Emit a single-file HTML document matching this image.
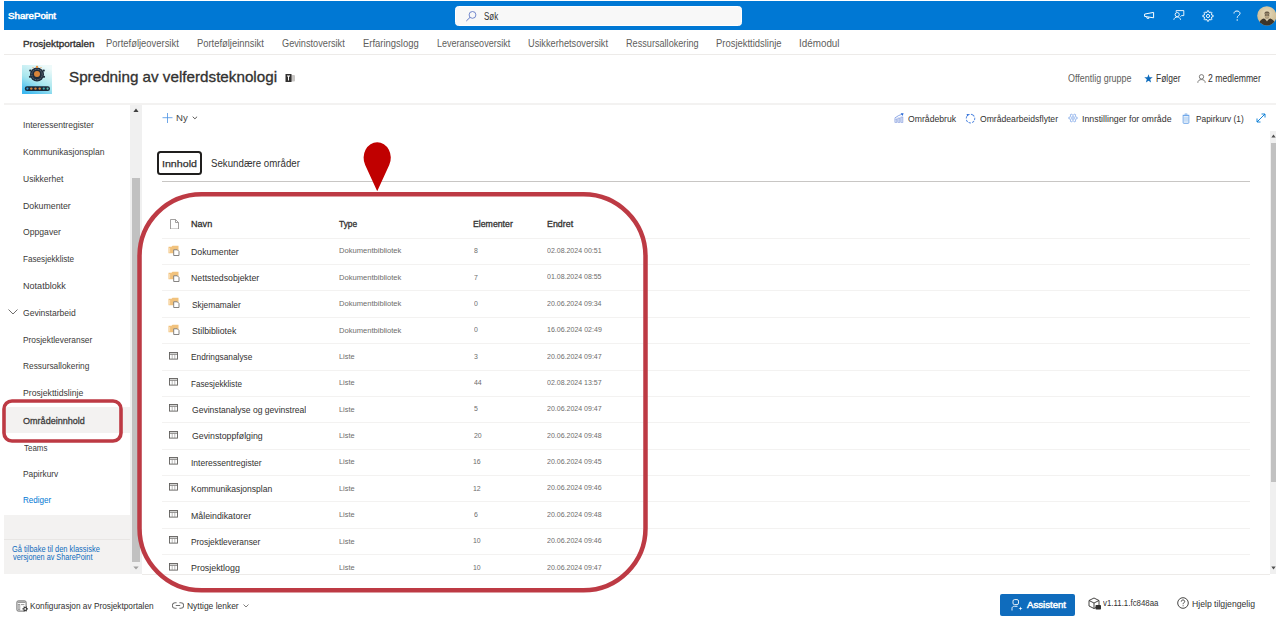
<!DOCTYPE html>
<html><head><meta charset="utf-8">
<style>
*{box-sizing:border-box;margin:0;padding:0}
html,body{width:1277px;height:624px;overflow:hidden;background:#fff;font-family:"Liberation Sans",sans-serif;color:#323130}
.a{position:absolute;white-space:nowrap;display:block}
.t{position:absolute;white-space:nowrap;line-height:1;transform-origin:0 0}
</style></head><body>
<div class="a" style="left:4px;top:1px;width:1272px;height:28.7px;background:#0078d4;"></div>
<div class="t" style="left:7.56px;top:11.91px;font-size:9.197px;-webkit-text-stroke:0.5px #fff;color:#fff;transform:scaleX(1.0573);">SharePoint</div>
<div class="a" style="left:455px;top:6px;width:287px;height:19.5px;background:#f8f8f8;border:1px solid #fff;border-radius:3.5px"></div>
<svg class="a" style="left:465px;top:9.5px" width="12" height="12" viewBox="0 0 12 12"><circle cx="7.5" cy="4.9" r="3.4" fill="none" stroke="#5b74c4" stroke-width="0.85"/><line x1="5" y1="7.4" x2="1.3" y2="11" stroke="#5b74c4" stroke-width="0.95"/></svg>
<div class="t" style="left:484.34px;top:11.74px;font-size:10.000px;color:#323130;transform:scaleX(0.7954);">Søk</div>
<svg class="a" style="left:1142px;top:9px" width="14" height="12" viewBox="0 0 14 12">
<path d="M2.6 5.1 L11.6 3.4 V8.8 L2.6 7.4 Z" fill="none" stroke="#fff" stroke-width="1" stroke-linejoin="round"/>
<path d="M4.6 7.7 L5.1 9.4 L6.9 9.4 L6.7 8.2" fill="none" stroke="#fff" stroke-width="0.9"/></svg>
<svg class="a" style="left:1172px;top:9px" width="14" height="12" viewBox="0 0 14 12">
<path d="M4.2 2.9 V1.6 H11.8 V6.6 H9.6 L8.4 7.6" fill="none" stroke="#fff" stroke-width="0.9" stroke-linejoin="round"/>
<circle cx="5.2" cy="5.6" r="2.1" fill="#0078d4" stroke="#fff" stroke-width="0.9"/>
<path d="M1.8 10.8 C2.2 8.9 3.5 8 5.2 8 C6.9 8 8.2 8.9 8.6 10.8" fill="none" stroke="#fff" stroke-width="0.9"/></svg>
<svg class="a" style="left:1202px;top:9.5px" width="12" height="12" viewBox="0 0 12 12">
<path d="M9.81 5.16 L11.14 5.21 L11.14 6.79 L9.81 6.84 L9.28 8.10 L10.19 9.07 L9.07 10.19 L8.10 9.28 L6.84 9.81 L6.79 11.14 L5.21 11.14 L5.16 9.81 L3.90 9.28 L2.93 10.19 L1.81 9.07 L2.72 8.10 L2.19 6.84 L0.86 6.79 L0.86 5.21 L2.19 5.16 L2.72 3.90 L1.81 2.93 L2.93 1.81 L3.90 2.72 L5.16 2.19 L5.21 0.86 L6.79 0.86 L6.84 2.19 L8.10 2.72 L9.07 1.81 L10.19 2.93 L9.28 3.90 Z" fill="none" stroke="#fff" stroke-width="0.9" stroke-linejoin="round"/>
<circle cx="6" cy="6" r="1.6" fill="none" stroke="#fff" stroke-width="0.9"/></svg>
<svg class="a" style="left:1232px;top:9.5px" width="10" height="12" viewBox="0 0 10 12">
<path d="M2 3.5 C2 1.8 3.3 1 5 1 C6.7 1 8 2 8 3.5 C8 5.2 5.2 5.6 5.2 7.8" fill="none" stroke="#fff" stroke-width="1"/>
<circle cx="5.2" cy="10" r="0.7" fill="#fff"/></svg>
<svg class="a" style="left:1256.5px;top:5.7px" width="19.5" height="20" viewBox="0 0 19.5 20">
<defs><clipPath id="av"><circle cx="9.8" cy="9.8" r="9.6"/></clipPath><radialGradient id="avg" cx="0.5" cy="0.4" r="0.6"><stop offset="0" stop-color="#e6dcc0"/><stop offset="1" stop-color="#cdb98e"/></radialGradient></defs>
<circle cx="9.8" cy="9.8" r="9.6" fill="url(#avg)"/>
<g clip-path="url(#av)">
<path d="M1.5 20 C2 15.5 4 13.2 7 12.6 L10 14.5 L13 12.6 C16 13.2 18 15.5 18.5 20 Z" fill="#3d352b"/>
<path d="M8.4 12.8 L10 15.6 L11.6 12.8 Z" fill="#d8ccb0"/>
<ellipse cx="10" cy="9.2" rx="2.6" ry="3.1" fill="#b9a684"/>
<path d="M7.4 8.2 C7.4 6 8.5 5.6 10 5.6 C11.5 5.6 12.6 6 12.6 8.2 L12 7.4 L8 7.4 Z" fill="#6b5c48"/>
<circle cx="8.9" cy="9" r="0.8" fill="#3a3128"/><circle cx="11.1" cy="9" r="0.8" fill="#3a3128"/>
<path d="M8.2 11 C9 12.4 11 12.4 11.8 11 L11.4 12.6 L8.6 12.6 Z" fill="#8a7b64"/>
</g></svg>
<div class="t" style="left:23.21px;top:39.12px;font-size:9.664px;-webkit-text-stroke:0.35px #323130;color:#323130;transform:scaleX(1.0231);">Prosjektportalen</div>
<div class="t" style="left:106.25px;top:38.77px;font-size:10.073px;color:#605e5c;transform:scaleX(0.9362);">Porteføljeoversikt</div>
<div class="t" style="left:196.85px;top:38.77px;font-size:10.073px;color:#605e5c;transform:scaleX(0.9327);">Porteføljeinnsikt</div>
<div class="t" style="left:282.24px;top:38.77px;font-size:10.073px;color:#605e5c;transform:scaleX(0.9122);">Gevinstoversikt</div>
<div class="t" style="left:363.24px;top:38.77px;font-size:10.073px;color:#605e5c;transform:scaleX(0.9400);">Erfaringslogg</div>
<div class="t" style="left:436.68px;top:38.77px;font-size:10.073px;color:#605e5c;transform:scaleX(0.8963);">Leveranseoversikt</div>
<div class="t" style="left:528.01px;top:38.77px;font-size:10.073px;color:#605e5c;transform:scaleX(0.9170);">Usikkerhetsoversikt</div>
<div class="t" style="left:625.97px;top:38.77px;font-size:10.073px;color:#605e5c;transform:scaleX(0.9075);">Ressursallokering</div>
<div class="t" style="left:715.84px;top:38.77px;font-size:10.073px;color:#605e5c;transform:scaleX(0.9374);">Prosjekttidslinje</div>
<div class="t" style="left:799.11px;top:38.77px;font-size:10.073px;color:#605e5c;transform:scaleX(0.9789);">Idémodul</div>
<div class="a" style="left:4px;top:54px;width:1272px;height:1px;background:#edebe9;"></div>
<svg class="a" style="left:22px;top:65px" width="30" height="29" viewBox="0 0 30 29">
<defs><linearGradient id="lg" x1="0.7" y1="0" x2="0.2" y2="1"><stop offset="0" stop-color="#eefafa"/><stop offset="0.55" stop-color="#a8e6ee"/><stop offset="1" stop-color="#3cb8f0"/></linearGradient></defs>
<rect width="30" height="29" fill="url(#lg)"/>
<circle cx="15" cy="9.5" r="7" fill="#1f2d3d"/>
<circle cx="15" cy="9.5" r="5.2" fill="none" stroke="#7f8a96" stroke-width="0.8" stroke-dasharray="1 0.8"/>
<circle cx="15" cy="9" r="3" fill="#d9843a"/>
<circle cx="8.2" cy="5.6" r="1.1" fill="#1f2d3d"/><circle cx="21.8" cy="5.6" r="1.1" fill="#1f2d3d"/><circle cx="8" cy="11.8" r="1.1" fill="#1f2d3d"/><circle cx="22" cy="11.8" r="1.1" fill="#1f2d3d"/>
<circle cx="15" cy="1.9" r="1.2" fill="#e58d3a"/><circle cx="11" cy="2.6" r="0.7" fill="#f0a860"/><circle cx="19" cy="2.6" r="0.7" fill="#f0a860"/>
<rect x="2.8" y="21.3" width="25.2" height="4.6" rx="2.2" fill="#1b2838"/>
<circle cx="5.4" cy="23.6" r="1.1" fill="#2f9ad8"/><circle cx="9.3" cy="23.6" r="1.2" fill="#d9843a"/><circle cx="13.5" cy="23.6" r="1.2" fill="#d9843a"/><circle cx="17.7" cy="23.6" r="1.2" fill="#d9843a"/><circle cx="21.8" cy="23.6" r="1.1" fill="#3fb0b0"/><circle cx="25.6" cy="23.6" r="1.1" fill="#5ab8a8"/></svg>
<div class="t" style="left:68.71px;top:70.04px;font-size:14.955px;-webkit-text-stroke:0.32px #323130;color:#323130;transform:scaleX(1.0184);">Spredning av velferdsteknologi</div>
<svg class="a" style="left:285px;top:73px" width="11" height="10" viewBox="0 0 11 10">
<rect x="4.5" y="2" width="5.5" height="6.5" rx="1" fill="#c8c6c4"/><rect x="0.5" y="1" width="6" height="8" fill="#323130"/>
<path d="M2 3 H5 M3.5 3 V7.5" stroke="#fff" stroke-width="1"/></svg>
<div class="t" style="left:1067.80px;top:74.35px;font-size:10.219px;color:#605e5c;transform:scaleX(0.8773);">Offentlig gruppe</div>
<svg class="a" style="left:1143.5px;top:74px" width="9" height="9" viewBox="0 0 10 10"><path d="M5 0.3 L6.2 3.6 L9.7 3.7 L6.9 5.9 L7.9 9.4 L5 7.4 L2.1 9.4 L3.1 5.9 L0.3 3.7 L3.8 3.6 Z" fill="#0f6cbd"/></svg>
<div class="t" style="left:1156.22px;top:74.35px;font-size:10.219px;color:#323130;transform:scaleX(0.8313);">Følger</div>
<svg class="a" style="left:1197px;top:74px" width="9" height="9" viewBox="0 0 9 9"><circle cx="4.5" cy="2.8" r="2.2" fill="none" stroke="#605e5c" stroke-width="0.8"/><path d="M0.8 8.8 C0.8 6.5 2.5 5.6 4.5 5.6 C6.5 5.6 8.2 6.5 8.2 8.8" fill="none" stroke="#605e5c" stroke-width="0.8"/></svg>
<div class="t" style="left:1208.27px;top:74.35px;font-size:10.219px;color:#323130;transform:scaleX(0.8466);">2 medlemmer</div>
<div class="a" style="left:4px;top:103px;width:1272px;height:2px;background:#f3f2f1;"></div>
<div class="a" style="left:130px;top:105px;width:12px;height:469px;background:#f0f0f0;"></div>
<div class="a" style="left:131.5px;top:178px;width:8.5px;height:384px;background:#c1c1c1;"></div>
<svg class="a" style="left:133px;top:108px" width="6" height="4.5" viewBox="0 0 6 4.5"><path d="M0.4 3.9 L3 0.6 L5.6 3.9 Z" fill="#404040"/></svg>
<svg class="a" style="left:133px;top:565.5px" width="6" height="4" viewBox="0 0 6 4"><path d="M0.3 0.4 L3 3.6 L5.7 0.4 Z" fill="#a0a0a0"/></svg>
<div class="a" style="left:6px;top:406.5px;width:124px;height:26.5px;background:#f3f2f1;"></div>
<div class="t" style="left:23.03px;top:120.02px;font-size:9.781px;color:#3b3a39;transform:scaleX(0.8754);">Interessentregister</div>
<div class="t" style="left:23.11px;top:147.22px;font-size:9.781px;color:#3b3a39;transform:scaleX(0.8782);">Kommunikasjonsplan</div>
<div class="t" style="left:23.16px;top:173.52px;font-size:9.781px;color:#3b3a39;transform:scaleX(0.8726);">Usikkerhet</div>
<div class="t" style="left:23.10px;top:200.52px;font-size:9.781px;color:#3b3a39;transform:scaleX(0.8982);">Dokumenter</div>
<div class="t" style="left:23.41px;top:227.12px;font-size:9.781px;color:#3b3a39;transform:scaleX(0.8831);">Oppgaver</div>
<div class="t" style="left:23.15px;top:253.82px;font-size:9.781px;color:#3b3a39;transform:scaleX(0.8339);">Fasesjekkliste</div>
<div class="t" style="left:23.07px;top:280.82px;font-size:9.781px;color:#3b3a39;transform:scaleX(0.9288);">Notatblokk</div>
<div class="t" style="left:23.37px;top:307.62px;font-size:9.781px;color:#3b3a39;transform:scaleX(0.8746);">Gevinstarbeid</div>
<div class="t" style="left:23.13px;top:334.82px;font-size:9.781px;color:#3b3a39;transform:scaleX(0.8569);">Prosjektleveranser</div>
<div class="t" style="left:23.13px;top:361.42px;font-size:9.781px;color:#3b3a39;transform:scaleX(0.8546);">Ressursallokering</div>
<div class="t" style="left:23.10px;top:388.22px;font-size:9.781px;color:#3b3a39;transform:scaleX(0.8890);">Prosjekttidslinje</div>
<div class="t" style="left:23.39px;top:416.30px;font-size:9.454px;-webkit-text-stroke:0.28px #3b3a39;color:#3b3a39;transform:scaleX(0.9594);">Områdeinnhold</div>
<div class="t" style="left:23.64px;top:442.62px;font-size:9.781px;color:#3b3a39;transform:scaleX(0.8137);">Teams</div>
<div class="t" style="left:23.13px;top:469.02px;font-size:9.781px;color:#3b3a39;transform:scaleX(0.8545);">Papirkurv</div>
<div class="t" style="left:23.15px;top:495.42px;font-size:9.781px;color:#0078d4;transform:scaleX(0.8257);">Rediger</div>
<svg class="a" style="left:8px;top:309px" width="10" height="6" viewBox="0 0 10 6"><path d="M0.5 0.5 L5 5 L9.5 0.5" fill="none" stroke="#605e5c" stroke-width="0.9"/></svg>
<div class="a" style="left:4px;top:514.5px;width:126px;height:59.5px;background:#f3f2f1;"></div>
<div class="a" style="left:4px;top:539px;width:126px;height:1px;background:#e8e6e4;"></div>
<div class="t" style="left:12.43px;top:544.63px;font-size:8.467px;color:#0f6cbd;transform:scaleX(0.8814);">Gå tilbake til den klassiske</div>
<div class="t" style="left:13.06px;top:553.33px;font-size:8.467px;color:#0f6cbd;transform:scaleX(0.8626);">versjonen av SharePoint</div>
<svg class="a" style="left:162px;top:113px" width="11" height="10" viewBox="0 0 11 10"><path d="M5.5 0 V10 M0.5 4.7 H10.5" stroke="#4a90e2" stroke-width="0.8"/></svg>
<div class="t" style="left:176.03px;top:113.02px;font-size:9.781px;color:#4a4847;transform:scaleX(0.9865);">Ny</div>
<svg class="a" style="left:192.3px;top:115.6px" width="6" height="4" viewBox="0 0 6 4"><path d="M0.7 0.7 L2.9 2.8 L5.1 0.7" fill="none" stroke="#5b5a59" stroke-width="1"/></svg>
<svg class="a" style="left:893.5px;top:113px" width="10" height="10" viewBox="0 0 10 10">
<rect x="0.9" y="6" width="2" height="3.3" fill="#d9e2f6" stroke="#7f97dc" stroke-width="0.6"/><rect x="3.9" y="5" width="2" height="4.3" fill="#d9e2f6" stroke="#7f97dc" stroke-width="0.6"/><rect x="6.9" y="4" width="2" height="5.3" fill="#d9e2f6" stroke="#7f97dc" stroke-width="0.6"/>
<path d="M0.6 5.2 L4.5 2.6 L8.2 1.2" fill="none" stroke="#6d8fe0" stroke-width="0.8"/><path d="M6.6 0.2 L9.6 0.3 L8.6 3 Z" fill="#2a6bd8"/></svg>
<div class="t" style="left:907.81px;top:113.52px;font-size:9.781px;color:#323130;transform:scaleX(0.8861);">Områdebruk</div>
<svg class="a" style="left:965px;top:112.5px" width="11" height="11" viewBox="0 0 11 11">
<circle cx="5.5" cy="5.6" r="4.3" fill="none" stroke="#4f86e0" stroke-width="0.95" stroke-dasharray="2.4 1.1" transform="rotate(-60 5.5 5.6)"/><path d="M1.6 0.9 L4.2 1.2 L2.2 3.4 Z" fill="#2a6bd8"/></svg>
<div class="t" style="left:979.81px;top:113.52px;font-size:9.781px;color:#323130;transform:scaleX(0.8820);">Områdearbeidsflyter</div>
<svg class="a" style="left:1067.5px;top:112.8px" width="10" height="10" viewBox="0 0 12 12">
<path d="M8.86 7.65 L8.70 7.89 L8.60 8.18 L8.97 8.97 L9.22 9.84 L8.93 10.18 L8.55 10.42 L8.16 10.62 L7.71 10.71 L7.09 10.06 L6.59 9.34 L6.29 9.29 L6.00 9.30 L5.71 9.29 L5.41 9.34 L4.91 10.06 L4.29 10.71 L3.84 10.62 L3.45 10.42 L3.07 10.18 L2.78 9.84 L3.03 8.97 L3.40 8.18 L3.30 7.89 L3.14 7.65 L3.01 7.39 L2.81 7.16 L1.94 7.09 L1.07 6.87 L0.92 6.44 L0.90 6.00 L0.92 5.56 L1.07 5.13 L1.94 4.91 L2.81 4.84 L3.01 4.61 L3.14 4.35 L3.30 4.11 L3.40 3.82 L3.03 3.03 L2.78 2.16 L3.07 1.82 L3.45 1.58 L3.84 1.38 L4.29 1.29 L4.91 1.94 L5.41 2.66 L5.71 2.71 L6.00 2.70 L6.29 2.71 L6.59 2.66 L7.09 1.94 L7.71 1.29 L8.16 1.38 L8.55 1.58 L8.93 1.82 L9.22 2.16 L8.97 3.03 L8.60 3.82 L8.70 4.11 L8.86 4.35 L8.99 4.61 L9.19 4.84 L10.06 4.91 L10.93 5.13 L11.08 5.56 L11.10 6.00 L11.08 6.44 L10.93 6.87 L10.06 7.09 L9.19 7.16 L8.99 7.39 Z" fill="none" stroke="#5a8ee2" stroke-width="0.8" stroke-linejoin="round"/>
<circle cx="6" cy="6" r="1.6" fill="none" stroke="#5a8ee2" stroke-width="0.8"/></svg>
<div class="t" style="left:1081.91px;top:113.52px;font-size:9.781px;color:#323130;transform:scaleX(0.9017);">Innstillinger for område</div>
<svg class="a" style="left:1182px;top:112.5px" width="8" height="11" viewBox="0 0 8 11">
<rect x="1.1" y="2.3" width="5.8" height="8.1" rx="0.9" fill="#e3eefa" stroke="#5b9ae6" stroke-width="0.75"/><path d="M0.6 2.3 H7.4 M2.7 1 H5.3" stroke="#5b9ae6" stroke-width="0.75"/><path d="M3 4 V8.6 M5 4 V8.6" stroke="#8bb8ee" stroke-width="0.6"/></svg>
<div class="t" style="left:1195.93px;top:113.52px;font-size:9.781px;color:#323130;transform:scaleX(0.8538);">Papirkurv (1)</div>
<svg class="a" style="left:1256px;top:113px" width="10" height="10" viewBox="0 0 10 10">
<path d="M1 9 L9 1 M5.5 1 H9 V4.5 M1 5.5 V9 H4.5" fill="none" stroke="#0078d4" stroke-width="0.9"/></svg>
<div class="a" style="left:1269.8px;top:131px;width:6.4px;height:443px;background:#f0f0f0;"></div>
<div class="a" style="left:1271px;top:143px;width:5px;height:339px;background:#c1c1c1;"></div>
<svg class="a" style="left:1271px;top:134px" width="5" height="4" viewBox="0 0 5 4"><path d="M0.3 3.6 L2.5 0.6 L4.7 3.6 Z" fill="#505050"/></svg>
<svg class="a" style="left:1271px;top:566px" width="5" height="4" viewBox="0 0 5 4"><path d="M0.3 0.4 L2.5 3.4 L4.7 0.4 Z" fill="#505050"/></svg>
<div class="a" style="left:156.8px;top:150.8px;width:45.2px;height:24.5px;background:transparent;border:2px solid #201f1e;border-radius:3.5px"></div>
<div class="t" style="left:161.74px;top:159.12px;font-size:9.781px;-webkit-text-stroke:0.25px #323130;color:#323130;transform:scaleX(1.0895);">Innhold</div>
<div class="t" style="left:210.86px;top:158.87px;font-size:10.073px;color:#323130;transform:scaleX(0.9633);">Sekundære områder</div>
<div class="a" style="left:162px;top:181px;width:1088px;height:1px;background:#c8c6c4;"></div>
<div class="a" style="left:142px;top:574px;width:1128px;height:1px;background:#edebe9;"></div>
<svg class="a" style="left:170px;top:218.5px" width="9" height="10.5" viewBox="0 0 9 10.5">
<path d="M0.5 0.5 H5.5 L8.5 3.5 V10 H0.5 Z M5.5 0.5 V3.5 H8.5" fill="none" stroke="#8a8886" stroke-width="0.8" stroke-linejoin="round"/></svg>
<div class="t" style="left:191.27px;top:220.36px;font-size:9.139px;-webkit-text-stroke:0.3px #323130;color:#323130;transform:scaleX(0.9943);">Navn</div>
<div class="t" style="left:339.23px;top:220.36px;font-size:9.139px;-webkit-text-stroke:0.3px #323130;color:#323130;transform:scaleX(0.9171);">Type</div>
<div class="t" style="left:473.10px;top:220.36px;font-size:9.139px;-webkit-text-stroke:0.3px #323130;color:#323130;transform:scaleX(0.9569);">Elementer</div>
<div class="t" style="left:546.59px;top:220.36px;font-size:9.139px;-webkit-text-stroke:0.3px #323130;color:#323130;transform:scaleX(0.9718);">Endret</div>
<div class="a" style="left:162px;top:237.5px;width:1088px;height:1px;background:#f3f2f1;"></div>
<svg class="a" style="left:167.5px;top:244.59px" width="12" height="11" viewBox="0 0 12 11">
<path d="M0.5 1.8 H3.5 L4.5 0.8 H10.5 V8.3 H0.5 Z" fill="#f1c27d"/><path d="M1.6 3 V7.5" stroke="#fbe6c4" stroke-width="0.8"/>
<path d="M5.7 4.8 H9.3 L11 6.5 V10.5 H5.7 Z" fill="#fff" stroke="#797775" stroke-width="0.9" stroke-linejoin="round"/></svg>
<div class="t" style="left:191.30px;top:246.82px;font-size:9.781px;color:#323130;transform:scaleX(0.8982);">Dokumenter</div>
<div class="t" style="left:338.79px;top:247.40px;font-size:7.445px;color:#6e6d6c;transform:scaleX(1.0191);">Dokumentbibliotek</div>
<div class="t" style="left:473.69px;top:247.15px;font-size:7.737px;color:#6e6d6c;transform:scaleX(0.9000);">8</div>
<div class="t" style="left:547.02px;top:247.03px;font-size:7.883px;color:#6e6d6c;transform:scaleX(0.8896);">02.08.2024 00:51</div>
<div class="a" style="left:162px;top:264.075px;width:1088px;height:1px;background:#f3f2f1;"></div>
<svg class="a" style="left:167.5px;top:270.96px" width="12" height="11" viewBox="0 0 12 11">
<path d="M0.5 1.8 H3.5 L4.5 0.8 H10.5 V8.3 H0.5 Z" fill="#f1c27d"/><path d="M1.6 3 V7.5" stroke="#fbe6c4" stroke-width="0.8"/>
<path d="M5.7 4.8 H9.3 L11 6.5 V10.5 H5.7 Z" fill="#fff" stroke="#797775" stroke-width="0.9" stroke-linejoin="round"/></svg>
<div class="t" style="left:191.30px;top:273.20px;font-size:9.781px;color:#323130;transform:scaleX(0.8980);">Nettstedsobjekter</div>
<div class="t" style="left:338.79px;top:273.77px;font-size:7.445px;color:#6e6d6c;transform:scaleX(1.0191);">Dokumentbibliotek</div>
<div class="t" style="left:473.65px;top:273.53px;font-size:7.737px;color:#6e6d6c;transform:scaleX(0.9000);">7</div>
<div class="t" style="left:547.02px;top:273.40px;font-size:7.883px;color:#6e6d6c;transform:scaleX(0.8890);">01.08.2024 08:55</div>
<div class="a" style="left:162px;top:290.45px;width:1088px;height:1px;background:#f3f2f1;"></div>
<svg class="a" style="left:167.5px;top:297.34px" width="12" height="11" viewBox="0 0 12 11">
<path d="M0.5 1.8 H3.5 L4.5 0.8 H10.5 V8.3 H0.5 Z" fill="#f1c27d"/><path d="M1.6 3 V7.5" stroke="#fbe6c4" stroke-width="0.8"/>
<path d="M5.7 4.8 H9.3 L11 6.5 V10.5 H5.7 Z" fill="#fff" stroke="#797775" stroke-width="0.9" stroke-linejoin="round"/></svg>
<div class="t" style="left:191.62px;top:299.57px;font-size:9.781px;color:#323130;transform:scaleX(0.8558);">Skjemamaler</div>
<div class="t" style="left:338.79px;top:300.15px;font-size:7.445px;color:#6e6d6c;transform:scaleX(1.0191);">Dokumentbibliotek</div>
<div class="t" style="left:473.72px;top:299.90px;font-size:7.737px;color:#6e6d6c;transform:scaleX(0.9000);">0</div>
<div class="t" style="left:546.95px;top:299.78px;font-size:7.883px;color:#6e6d6c;transform:scaleX(0.8890);">20.06.2024 09:34</div>
<div class="a" style="left:162px;top:316.825px;width:1088px;height:1px;background:#f3f2f1;"></div>
<svg class="a" style="left:167.5px;top:323.71px" width="12" height="11" viewBox="0 0 12 11">
<path d="M0.5 1.8 H3.5 L4.5 0.8 H10.5 V8.3 H0.5 Z" fill="#f1c27d"/><path d="M1.6 3 V7.5" stroke="#fbe6c4" stroke-width="0.8"/>
<path d="M5.7 4.8 H9.3 L11 6.5 V10.5 H5.7 Z" fill="#fff" stroke="#797775" stroke-width="0.9" stroke-linejoin="round"/></svg>
<div class="t" style="left:191.61px;top:325.95px;font-size:9.781px;color:#323130;transform:scaleX(0.8970);">Stilbibliotek</div>
<div class="t" style="left:338.79px;top:326.52px;font-size:7.445px;color:#6e6d6c;transform:scaleX(1.0191);">Dokumentbibliotek</div>
<div class="t" style="left:473.72px;top:326.28px;font-size:7.737px;color:#6e6d6c;transform:scaleX(0.9000);">0</div>
<div class="t" style="left:546.77px;top:326.15px;font-size:7.883px;color:#6e6d6c;transform:scaleX(0.8937);">16.06.2024 02:49</div>
<div class="a" style="left:162px;top:343.2px;width:1088px;height:1px;background:#f3f2f1;"></div>
<svg class="a" style="left:168.5px;top:351.59px" width="9" height="8" viewBox="0 0 9 8">
<rect x="0.5" y="0.5" width="8" height="6.6" fill="none" stroke="#605e5c" stroke-width="0.9"/><path d="M0.5 2.2 H8.5" stroke="#605e5c" stroke-width="0.9"/><path d="M3.2 2.2 V7 M5.8 2.2 V7" stroke="#8a8886" stroke-width="0.6"/></svg>
<div class="t" style="left:191.34px;top:352.32px;font-size:9.781px;color:#323130;transform:scaleX(0.8494);">Endringsanalyse</div>
<div class="t" style="left:338.81px;top:352.90px;font-size:7.445px;color:#6e6d6c;transform:scaleX(0.9947);">Liste</div>
<div class="t" style="left:473.72px;top:352.65px;font-size:7.737px;color:#6e6d6c;transform:scaleX(0.9000);">3</div>
<div class="t" style="left:546.95px;top:352.53px;font-size:7.883px;color:#6e6d6c;transform:scaleX(0.8913);">20.06.2024 09:47</div>
<div class="a" style="left:162px;top:369.575px;width:1088px;height:1px;background:#f3f2f1;"></div>
<svg class="a" style="left:168.5px;top:377.96px" width="9" height="8" viewBox="0 0 9 8">
<rect x="0.5" y="0.5" width="8" height="6.6" fill="none" stroke="#605e5c" stroke-width="0.9"/><path d="M0.5 2.2 H8.5" stroke="#605e5c" stroke-width="0.9"/><path d="M3.2 2.2 V7 M5.8 2.2 V7" stroke="#8a8886" stroke-width="0.6"/></svg>
<div class="t" style="left:191.35px;top:378.70px;font-size:9.781px;color:#323130;transform:scaleX(0.8305);">Fasesjekkliste</div>
<div class="t" style="left:338.81px;top:379.27px;font-size:7.445px;color:#6e6d6c;transform:scaleX(0.9947);">Liste</div>
<div class="t" style="left:473.86px;top:379.03px;font-size:7.737px;color:#6e6d6c;transform:scaleX(0.9000);">44</div>
<div class="t" style="left:547.02px;top:378.90px;font-size:7.883px;color:#6e6d6c;transform:scaleX(0.8902);">02.08.2024 13:57</div>
<div class="a" style="left:162px;top:395.95px;width:1088px;height:1px;background:#f3f2f1;"></div>
<svg class="a" style="left:168.5px;top:404.34px" width="9" height="8" viewBox="0 0 9 8">
<rect x="0.5" y="0.5" width="8" height="6.6" fill="none" stroke="#605e5c" stroke-width="0.9"/><path d="M0.5 2.2 H8.5" stroke="#605e5c" stroke-width="0.9"/><path d="M3.2 2.2 V7 M5.8 2.2 V7" stroke="#8a8886" stroke-width="0.6"/></svg>
<div class="a" style="left:150px;top:397.95px;width:155.5px;height:22px;overflow:hidden"><div class="t" style="left:41.57px;top:7.12px;font-size:9.781px;color:#323130;transform:scaleX(0.8770);">Gevinstanalyse og gevinstrealisering</div></div>
<div class="t" style="left:338.81px;top:405.65px;font-size:7.445px;color:#6e6d6c;transform:scaleX(0.9947);">Liste</div>
<div class="t" style="left:473.72px;top:405.40px;font-size:7.737px;color:#6e6d6c;transform:scaleX(0.9000);">5</div>
<div class="t" style="left:546.95px;top:405.28px;font-size:7.883px;color:#6e6d6c;transform:scaleX(0.8913);">20.06.2024 09:47</div>
<div class="a" style="left:162px;top:422.325px;width:1088px;height:1px;background:#f3f2f1;"></div>
<svg class="a" style="left:168.5px;top:430.71px" width="9" height="8" viewBox="0 0 9 8">
<rect x="0.5" y="0.5" width="8" height="6.6" fill="none" stroke="#605e5c" stroke-width="0.9"/><path d="M0.5 2.2 H8.5" stroke="#605e5c" stroke-width="0.9"/><path d="M3.2 2.2 V7 M5.8 2.2 V7" stroke="#8a8886" stroke-width="0.6"/></svg>
<div class="t" style="left:191.56px;top:431.45px;font-size:9.781px;color:#323130;transform:scaleX(0.8982);">Gevinstoppfølging</div>
<div class="t" style="left:338.81px;top:432.02px;font-size:7.445px;color:#6e6d6c;transform:scaleX(0.9947);">Liste</div>
<div class="t" style="left:473.65px;top:431.78px;font-size:7.737px;color:#6e6d6c;transform:scaleX(0.9000);">20</div>
<div class="t" style="left:546.95px;top:431.65px;font-size:7.883px;color:#6e6d6c;transform:scaleX(0.8902);">20.06.2024 09:48</div>
<div class="a" style="left:162px;top:448.7px;width:1088px;height:1px;background:#f3f2f1;"></div>
<svg class="a" style="left:168.5px;top:457.09px" width="9" height="8" viewBox="0 0 9 8">
<rect x="0.5" y="0.5" width="8" height="6.6" fill="none" stroke="#605e5c" stroke-width="0.9"/><path d="M0.5 2.2 H8.5" stroke="#605e5c" stroke-width="0.9"/><path d="M3.2 2.2 V7 M5.8 2.2 V7" stroke="#8a8886" stroke-width="0.6"/></svg>
<div class="t" style="left:191.23px;top:457.82px;font-size:9.781px;color:#323130;transform:scaleX(0.8729);">Interessentregister</div>
<div class="t" style="left:338.81px;top:458.40px;font-size:7.445px;color:#6e6d6c;transform:scaleX(0.9947);">Liste</div>
<div class="t" style="left:473.48px;top:458.15px;font-size:7.737px;color:#6e6d6c;transform:scaleX(0.9000);">16</div>
<div class="t" style="left:546.95px;top:458.03px;font-size:7.883px;color:#6e6d6c;transform:scaleX(0.8902);">20.06.2024 09:45</div>
<div class="a" style="left:162px;top:475.075px;width:1088px;height:1px;background:#f3f2f1;"></div>
<svg class="a" style="left:168.5px;top:483.46px" width="9" height="8" viewBox="0 0 9 8">
<rect x="0.5" y="0.5" width="8" height="6.6" fill="none" stroke="#605e5c" stroke-width="0.9"/><path d="M0.5 2.2 H8.5" stroke="#605e5c" stroke-width="0.9"/><path d="M3.2 2.2 V7 M5.8 2.2 V7" stroke="#8a8886" stroke-width="0.6"/></svg>
<div class="t" style="left:191.32px;top:484.20px;font-size:9.781px;color:#323130;transform:scaleX(0.8749);">Kommunikasjonsplan</div>
<div class="t" style="left:338.81px;top:484.77px;font-size:7.445px;color:#6e6d6c;transform:scaleX(0.9947);">Liste</div>
<div class="t" style="left:473.48px;top:484.53px;font-size:7.737px;color:#6e6d6c;transform:scaleX(0.9000);">12</div>
<div class="t" style="left:546.95px;top:484.40px;font-size:7.883px;color:#6e6d6c;transform:scaleX(0.8902);">20.06.2024 09:46</div>
<div class="a" style="left:162px;top:501.45px;width:1088px;height:1px;background:#f3f2f1;"></div>
<svg class="a" style="left:168.5px;top:509.84px" width="9" height="8" viewBox="0 0 9 8">
<rect x="0.5" y="0.5" width="8" height="6.6" fill="none" stroke="#605e5c" stroke-width="0.9"/><path d="M0.5 2.2 H8.5" stroke="#605e5c" stroke-width="0.9"/><path d="M3.2 2.2 V7 M5.8 2.2 V7" stroke="#8a8886" stroke-width="0.6"/></svg>
<div class="t" style="left:191.30px;top:510.57px;font-size:9.781px;color:#323130;transform:scaleX(0.8995);">Måleindikatorer</div>
<div class="t" style="left:338.81px;top:511.15px;font-size:7.445px;color:#6e6d6c;transform:scaleX(0.9947);">Liste</div>
<div class="t" style="left:473.65px;top:510.90px;font-size:7.737px;color:#6e6d6c;transform:scaleX(0.9000);">6</div>
<div class="t" style="left:546.95px;top:510.78px;font-size:7.883px;color:#6e6d6c;transform:scaleX(0.8902);">20.06.2024 09:48</div>
<div class="a" style="left:162px;top:527.825px;width:1088px;height:1px;background:#f3f2f1;"></div>
<svg class="a" style="left:168.5px;top:536.21px" width="9" height="8" viewBox="0 0 9 8">
<rect x="0.5" y="0.5" width="8" height="6.6" fill="none" stroke="#605e5c" stroke-width="0.9"/><path d="M0.5 2.2 H8.5" stroke="#605e5c" stroke-width="0.9"/><path d="M3.2 2.2 V7 M5.8 2.2 V7" stroke="#8a8886" stroke-width="0.6"/></svg>
<div class="t" style="left:191.33px;top:536.95px;font-size:9.781px;color:#323130;transform:scaleX(0.8569);">Prosjektleveranser</div>
<div class="t" style="left:338.81px;top:537.52px;font-size:7.445px;color:#6e6d6c;transform:scaleX(0.9947);">Liste</div>
<div class="t" style="left:473.48px;top:537.28px;font-size:7.737px;color:#6e6d6c;transform:scaleX(0.9000);">10</div>
<div class="t" style="left:546.95px;top:537.15px;font-size:7.883px;color:#6e6d6c;transform:scaleX(0.8902);">20.06.2024 09:46</div>
<div class="a" style="left:162px;top:554.2px;width:1088px;height:1px;background:#f3f2f1;"></div>
<svg class="a" style="left:168.5px;top:562.59px" width="9" height="8" viewBox="0 0 9 8">
<rect x="0.5" y="0.5" width="8" height="6.6" fill="none" stroke="#605e5c" stroke-width="0.9"/><path d="M0.5 2.2 H8.5" stroke="#605e5c" stroke-width="0.9"/><path d="M3.2 2.2 V7 M5.8 2.2 V7" stroke="#8a8886" stroke-width="0.6"/></svg>
<div class="a" style="left:150px;top:556.2px;width:1100px;height:17.799999999999955px;overflow:hidden"><div class="t" style="left:41.29px;top:7.12px;font-size:9.781px;color:#323130;transform:scaleX(0.9088);">Prosjektlogg</div></div>
<div class="t" style="left:338.81px;top:563.90px;font-size:7.445px;color:#6e6d6c;transform:scaleX(0.9947);">Liste</div>
<div class="t" style="left:473.48px;top:563.65px;font-size:7.737px;color:#6e6d6c;transform:scaleX(0.9000);">10</div>
<div class="t" style="left:546.95px;top:563.53px;font-size:7.883px;color:#6e6d6c;transform:scaleX(0.8913);">20.06.2024 09:47</div>
<svg class="a" style="left:0;top:0" width="1277" height="624" viewBox="0 0 1277 624">
<rect x="139.5" y="194.2" width="506" height="396" rx="62" ry="62" fill="none" stroke="#bd3a44" stroke-width="4.5"/>
<rect x="4" y="401" width="117" height="40" rx="8" ry="8" fill="none" stroke="#bd3a44" stroke-width="3.6"/>
<path d="M377.2 191.2 L365.17 165.03 A13.6 15.5 0 1 1 389.23 165.03 Z" fill="#c00000"/>
</svg>
<svg class="a" style="left:15.5px;top:599.5px" width="13" height="13" viewBox="0 0 13 13">
<rect x="0.9" y="0.9" width="9.2" height="10.2" rx="1.3" fill="none" stroke="#6e6e6e" stroke-width="1"/>
<rect x="1.4" y="1.4" width="8.2" height="1.6" fill="#9a9a9a"/>
<rect x="2.2" y="4.3" width="1.6" height="5.6" fill="none" stroke="#8a8a8a" stroke-width="0.8"/><path d="M5 4.6 H8.4" stroke="#8a8a8a" stroke-width="0.9"/>
<path d="M12.05 8.90 L12.03 9.27 L11.42 9.50 L10.82 9.57 L10.72 9.78 L10.59 9.97 L10.83 10.53 L10.93 11.16 L10.62 11.37 L10.29 11.53 L9.80 11.12 L9.43 10.64 L9.20 10.65 L8.97 10.64 L8.60 11.12 L8.11 11.53 L7.78 11.37 L7.47 11.16 L7.57 10.53 L7.81 9.97 L7.68 9.78 L7.58 9.57 L6.98 9.50 L6.37 9.27 L6.35 8.90 L6.37 8.53 L6.98 8.30 L7.58 8.23 L7.68 8.03 L7.81 7.83 L7.57 7.27 L7.47 6.64 L7.77 6.43 L8.11 6.27 L8.60 6.68 L8.97 7.16 L9.20 7.15 L9.43 7.16 L9.80 6.68 L10.29 6.27 L10.62 6.43 L10.93 6.64 L10.83 7.27 L10.59 7.83 L10.72 8.03 L10.82 8.23 L11.42 8.30 L12.03 8.53 Z" fill="#333"/><circle cx="9.2" cy="8.9" r="0.9" fill="#fff"/></svg>
<div class="t" style="left:30.34px;top:601.12px;font-size:9.781px;color:#323130;transform:scaleX(0.8466);">Konfigurasjon av Prosjektportalen</div>
<svg class="a" style="left:171.5px;top:601.5px" width="12" height="7" viewBox="0 0 12 7">
<path d="M4.6 0.7 H3.1 A2.8 2.8 0 0 0 3.1 6.3 H4.6 M7.4 0.7 H8.9 A2.8 2.8 0 0 1 8.9 6.3 H7.4 M3.8 3.5 H8.2" fill="none" stroke="#707070" stroke-width="1.1"/></svg>
<div class="t" style="left:187.02px;top:601.12px;font-size:9.781px;color:#323130;transform:scaleX(0.8652);">Nyttige lenker</div>
<svg class="a" style="left:243px;top:604px" width="6" height="4" viewBox="0 0 6 4"><path d="M0.5 0.5 L3 3 L5.5 0.5" fill="none" stroke="#605e5c" stroke-width="0.8"/></svg>
<div class="a" style="left:1000.3px;top:594.1px;width:74.8px;height:22px;background:#0f6cbd;border-radius:2px"></div>
<svg class="a" style="left:1011px;top:598.5px" width="12" height="13" viewBox="0 0 12 13">
<rect x="2" y="0.6" width="5.5" height="5" rx="1.5" fill="none" stroke="#fff" stroke-width="0.9"/><path d="M1 11.5 V9.5 C1 8 2 7.3 3.5 7.3 H6.5" fill="none" stroke="#fff" stroke-width="0.9"/>
<path d="M9.5 7.5 L10 9 L11.5 9.5 L10 10 L9.5 11.5 L9 10 L7.5 9.5 L9 9 Z" fill="#fff"/></svg>
<div class="t" style="left:1027.30px;top:601.47px;font-size:9.255px;-webkit-text-stroke:0.45px #fff;color:#fff;transform:scaleX(1.0404);">Assistent</div>
<svg class="a" style="left:1087.5px;top:596.5px" width="14" height="13" viewBox="0 0 14 13">
<path d="M1 3.5 L6 1 L11 3.5 V9 L6 11.5 L1 9 Z M1 3.5 L6 6 L11 3.5 M6 6 V11.5" fill="none" stroke="#323130" stroke-width="0.9" stroke-linejoin="round"/>
<rect x="7.5" y="8" width="5.5" height="4.5" rx="0.8" fill="#323130"/></svg>
<div class="t" style="left:1102.86px;top:598.22px;font-size:9.781px;color:#323130;transform:scaleX(0.8066);">v1.11.1.fc848aa</div>
<svg class="a" style="left:1177px;top:596.5px" width="12" height="12" viewBox="0 0 12 12">
<circle cx="6" cy="6" r="5.3" fill="none" stroke="#323130" stroke-width="0.9"/><path d="M4.3 4.6 C4.3 3.5 5 3 6 3 C7 3 7.7 3.6 7.7 4.5 C7.7 5.6 6.1 5.8 6.1 7.2" fill="none" stroke="#323130" stroke-width="0.9"/><circle cx="6.1" cy="8.8" r="0.55" fill="#323130"/></svg>
<div class="t" style="left:1192.11px;top:598.62px;font-size:9.781px;color:#323130;transform:scaleX(0.8855);">Hjelp tilgjengelig</div>
</body></html>
